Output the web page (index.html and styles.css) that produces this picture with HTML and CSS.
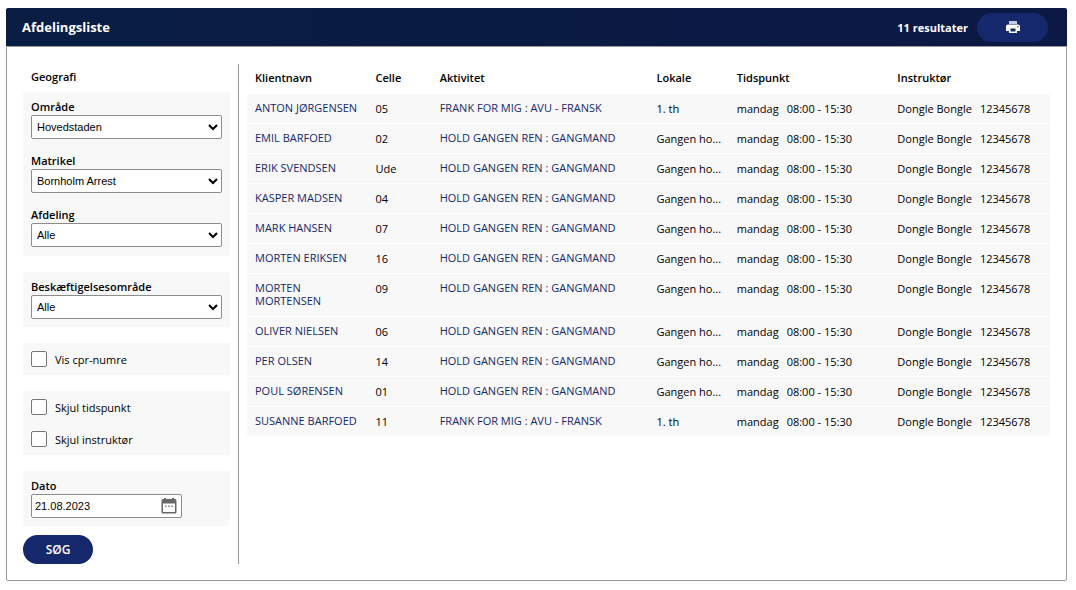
FILE: index.html
```html
<!DOCTYPE html>
<html lang="da">
<head>
<meta charset="utf-8">
<title>Afdelingsliste</title>
<link rel="stylesheet" href="styles.css">
</head>
<body>
<main class="panel">
  <header class="panel-header">
    <h1 class="panel-title">Afdelingsliste</h1>
    <span class="result-count">11 resultater</span>
    <button class="button print-button" type="button" aria-label="Udskriv">
      <svg class="print-icon" viewBox="0 0 16 16" aria-hidden="true">
        <path d="M4 2h8v3H4z" fill="#c3cae0"/>
        <path d="M3 5.500h10a2 2 0 0 1 2 2V12h-3v2H4v-2H1V7.500a2 2 0 0 1 2-2z" fill="#fff"/>
        <path d="M5.500 9.500h5v3h-5z" fill="#15286b"/>
        <path d="M12.300 7h1.200v1.200h-1.200z" fill="#15286b"/>
      </svg>
    </button>
  </header>
  <div class="panel-body">
    <form class="filters">
      <h2 class="filters-title">Geografi</h2>
      <div class="group group-geography">
        <div class="field">
          <label class="label" for="area">Område</label>
          <select class="control select" id="area"><option>Hovedstaden</option></select>
        </div>
        <div class="field">
          <label class="label" for="site">Matrikel</label>
          <select class="control select" id="site"><option>Bornholm Arrest</option></select>
        </div>
        <div class="field">
          <label class="label" for="ward">Afdeling</label>
          <select class="control select" id="ward"><option>Alle</option></select>
        </div>
      </div>
      <div class="group">
        <div class="field">
          <label class="label" for="occupation">Beskæftigelsesområde</label>
          <select class="control select" id="occupation"><option>Alle</option></select>
        </div>
      </div>
      <div class="group">
        <label class="check"><input class="checkbox" type="checkbox">Vis cpr-numre</label>
      </div>
      <div class="group">
        <label class="check"><input class="checkbox" type="checkbox">Skjul tidspunkt</label>
        <label class="check"><input class="checkbox" type="checkbox">Skjul instruktør</label>
      </div>
      <div class="group">
        <div class="field">
          <label class="label" for="date">Dato</label>
          <div class="control date-box">
            <input class="date-input" id="date" type="text" value="21.08.2023">
            <button class="date-button" type="button" aria-label="Vælg dato">
              <svg class="date-icon" viewBox="0 0 16 16" aria-hidden="true">
                <path d="M3 0h2v1h6V0h2v1h1a1.500 1.500 0 0 1 1.500 1.500v11.500a1.500 1.500 0 0 1-1.500 1.500H2A1.500 1.500 0 0 1 .5 14V2.500A1.500 1.500 0 0 1 2 1h1zM2 5.500V14h12V5.500z" fill="#666" fill-rule="evenodd"/>
                <path d="M4 7.500h1.500V9H4zM7.200 7.500h1.500V9H7.200zM10.400 7.500h1.500V9h-1.500z" fill="#777"/>
              </svg>
            </button>
          </div>
        </div>
      </div>
      <button class="button search-button" type="button">SØG</button>
    </form>
    <section class="results">
      <table class="table">
        <colgroup>
          <col class="col-name"><col class="col-cell"><col class="col-activity">
          <col class="col-room"><col class="col-time"><col class="col-instructor">
        </colgroup>
        <thead>
          <tr><th>Klientnavn</th><th>Celle</th><th>Aktivitet</th><th>Lokale</th><th>Tidspunkt</th><th>Instruktør</th></tr>
        </thead>
        <tbody>
          <tr><td><a class="link" href="#">ANTON JØRGENSEN</a></td><td>05</td><td><a class="link" href="#">FRANK FOR MIG : AVU - FRANSK</a></td><td>1. th</td><td><span class="part">mandag</span><span class="part">08:00 - 15:30</span></td><td><span class="part">Dongle Bongle</span><span class="part">12345678</span></td></tr>
          <tr><td><a class="link" href="#">EMIL BARFOED</a></td><td>02</td><td><a class="link" href="#">HOLD GANGEN REN : GANGMAND</a></td><td>Gangen ho...</td><td><span class="part">mandag</span><span class="part">08:00 - 15:30</span></td><td><span class="part">Dongle Bongle</span><span class="part">12345678</span></td></tr>
          <tr><td><a class="link" href="#">ERIK SVENDSEN</a></td><td>Ude</td><td><a class="link" href="#">HOLD GANGEN REN : GANGMAND</a></td><td>Gangen ho...</td><td><span class="part">mandag</span><span class="part">08:00 - 15:30</span></td><td><span class="part">Dongle Bongle</span><span class="part">12345678</span></td></tr>
          <tr><td><a class="link" href="#">KASPER MADSEN</a></td><td>04</td><td><a class="link" href="#">HOLD GANGEN REN : GANGMAND</a></td><td>Gangen ho...</td><td><span class="part">mandag</span><span class="part">08:00 - 15:30</span></td><td><span class="part">Dongle Bongle</span><span class="part">12345678</span></td></tr>
          <tr><td><a class="link" href="#">MARK HANSEN</a></td><td>07</td><td><a class="link" href="#">HOLD GANGEN REN : GANGMAND</a></td><td>Gangen ho...</td><td><span class="part">mandag</span><span class="part">08:00 - 15:30</span></td><td><span class="part">Dongle Bongle</span><span class="part">12345678</span></td></tr>
          <tr><td><a class="link" href="#">MORTEN ERIKSEN</a></td><td>16</td><td><a class="link" href="#">HOLD GANGEN REN : GANGMAND</a></td><td>Gangen ho...</td><td><span class="part">mandag</span><span class="part">08:00 - 15:30</span></td><td><span class="part">Dongle Bongle</span><span class="part">12345678</span></td></tr>
          <tr><td><a class="link" href="#">MORTEN MORTENSEN</a></td><td>09</td><td><a class="link" href="#">HOLD GANGEN REN : GANGMAND</a></td><td>Gangen ho...</td><td><span class="part">mandag</span><span class="part">08:00 - 15:30</span></td><td><span class="part">Dongle Bongle</span><span class="part">12345678</span></td></tr>
          <tr><td><a class="link" href="#">OLIVER NIELSEN</a></td><td>06</td><td><a class="link" href="#">HOLD GANGEN REN : GANGMAND</a></td><td>Gangen ho...</td><td><span class="part">mandag</span><span class="part">08:00 - 15:30</span></td><td><span class="part">Dongle Bongle</span><span class="part">12345678</span></td></tr>
          <tr><td><a class="link" href="#">PER OLSEN</a></td><td>14</td><td><a class="link" href="#">HOLD GANGEN REN : GANGMAND</a></td><td>Gangen ho...</td><td><span class="part">mandag</span><span class="part">08:00 - 15:30</span></td><td><span class="part">Dongle Bongle</span><span class="part">12345678</span></td></tr>
          <tr><td><a class="link" href="#">POUL SØRENSEN</a></td><td>01</td><td><a class="link" href="#">HOLD GANGEN REN : GANGMAND</a></td><td>Gangen ho...</td><td><span class="part">mandag</span><span class="part">08:00 - 15:30</span></td><td><span class="part">Dongle Bongle</span><span class="part">12345678</span></td></tr>
          <tr><td><a class="link" href="#">SUSANNE BARFOED</a></td><td>11</td><td><a class="link" href="#">FRANK FOR MIG : AVU - FRANSK</a></td><td>1. th</td><td><span class="part">mandag</span><span class="part">08:00 - 15:30</span></td><td><span class="part">Dongle Bongle</span><span class="part">12345678</span></td></tr>
        </tbody>
      </table>
    </section>
  </div>
</main>
</body>
</html>
```
FILE: styles.css
```css
* { box-sizing: border-box; }

body {
  margin: 0;
  padding: 8px 9px 8px 6px;
  background: #fff;
  color: #000;
  font: 11px/15px "Trebuchet MS", "Open Sans", sans-serif;
}

.panel-header {
  display: flex;
  align-items: center;
  gap: 9px;
  height: 38px;
  padding: 0 19px 0 16px;
  border-radius: 2px 2px 0 0;
  background: linear-gradient(90deg, #091d42, #0c1945);
  color: #fff;
}

.panel-title { flex: 1; margin: 0; font-size: 13px; line-height: 20px; font-weight: 700; }
.result-count { font-size: 11px; font-weight: 700; }

.button {
  height: 29px;
  border: 0;
  border-radius: 15px;
  background: #15286b;
  color: #fff;
  font: 600 12px/15px "Trebuchet MS", "Open Sans", sans-serif;
}

.print-button { display: grid; place-items: center; width: 71px; padding: 0; }
.print-icon { width: 16px; height: 16px; }

.panel-body {
  display: flex;
  padding: 17px 16px 16px;
  border: 1px solid #999;
  border-radius: 0 0 2px 2px;
}

.filters {
  display: flex;
  flex-direction: column;
  gap: 16px;
  width: 216px;
  padding-right: 8px;
  border-right: 1px solid #999;
}

.filters-title { margin: 5px 8px -8px; font-size: 11px; line-height: 15px; font-weight: 600; }

.group {
  display: flex;
  flex-direction: column;
  gap: 16px;
  padding: 8px;
  border-radius: 2px;
  background: #f8f8f8;
}

.group-geography { gap: 15px; padding-bottom: 9px; }

.field { display: flex; flex-direction: column; gap: 2px; }
.label { line-height: 13px; font-weight: 600; }

.control {
  height: 24px;
  border: 1px solid #8c8c8c;
  border-radius: 2px;
  background-color: #fff;
  color: #000;
  font: 11px/15px "Liberation Sans", Arial, sans-serif;
}

.select { width: 100%; padding: 0 1px; }

.check { display: flex; align-items: center; gap: 8px; height: 16px; }
.checkbox {
  width: 16px;
  height: 16px;
  margin: 0;
  appearance: none;
  border: 1px solid #767676;
  border-radius: 2px;
  background: #fff;
}
.checkbox:checked { background: #15286b; }

.date-box { display: flex; align-items: center; width: 151px; padding: 0 4px 0 3px; }
.date-input { flex: 1; min-width: 0; padding: 0; border: 0; outline: 0; font: inherit; }
.date-button { width: 16px; height: 16px; padding: 0; border: 0; background: none; }
.date-icon { display: block; width: 16px; height: 16px; }

.search-button { width: 70px; margin-top: -7px; }

.results { flex: 1; min-width: 0; padding-left: 8px; }

.table { width: 100%; table-layout: fixed; border-collapse: collapse; }
.col-name { width: 15%; }
.col-cell { width: 8%; }
.col-activity { width: 27%; }
.col-room { width: 10%; }
.col-time, .col-instructor { width: 20%; }

.table th { padding: 6px 8px 9px; text-align: left; font-weight: 600; }
.table td { padding: 7px 8px; vertical-align: top; white-space: nowrap; }
.table td:first-child { white-space: normal; }
.table td:has(.link) { padding: 7px 8px 9px; line-height: 13px; }
.table tbody tr { background: #f8f8f8; border-bottom: 1px solid #fff; }

.link { display: block; color: #15286b; text-decoration: none; }
.part + .part { margin-left: 8px; }
```
